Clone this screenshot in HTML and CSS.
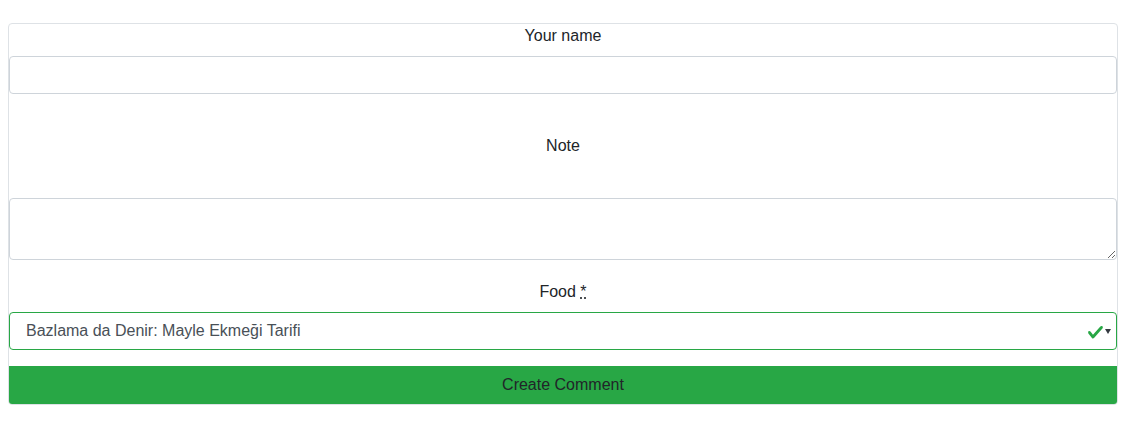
FILE: index.html
```html
<!DOCTYPE html>
<html lang="en">
<head>
<meta charset="utf-8">
<title>Create Comment</title>
<link rel="stylesheet" href="styles.css">
</head>
<body>
<form class="card">
  <label class="label label-name" for="name">Your name</label>
  <input class="control" id="name" type="text">
  <label class="label label-note" for="note">Note</label>
  <textarea class="control area" id="note" rows="2"></textarea>
  <label class="label label-food">Food <abbr class="req" title="required">*</abbr></label>
  <div class="select" role="combobox" aria-expanded="false">
    <span class="select-text">Bazlama da Denir: Mayle Ekmeği Tarifi</span>
    <svg class="check" width="17" height="13" viewBox="0 0 8 6.2" aria-hidden="true"><path fill="#28a745" d="M2.3 5.93L.6 3.73c-.4-1.04.46-1.4 1.1-.8l1.1 1.4 3.4-3.8c.6-.63 1.6-.27 1.2.7l-4 4.6c-.43.5-.8.4-1.1.1z" transform="translate(0,-0.2)"/></svg>
    <svg class="arrow" width="6" height="5" viewBox="0 0 6 5" aria-hidden="true"><path fill="#343a40" d="M0 0h6L3 5z"/></svg>
  </div>
  <button class="btn" type="button">Create Comment</button>
</form>
</body>
</html>
```
FILE: styles.css
```css
* { box-sizing: border-box; }
body {
  margin: 0;
  padding: 23px 24px 0 8px;
  font-family: "Liberation Sans", Arial, sans-serif;
  font-size: 16px;
  line-height: 24px;
  color: #212529;
  background: #fff;
}
.card {
  width: 1110px;
  border: 1px solid #dee2e6;
  border-radius: 4px;
  display: flex;
  flex-direction: column;
  overflow: hidden;
}
.label {
  display: block;
  text-align: center;
  line-height: 24px;
  height: 24px;
}
.label-name { margin-bottom: 8px; }
.label-note { margin-top: 40px; margin-bottom: 40px; }
.label-food { margin-top: 20px; margin-bottom: 8px; }
.req {
  text-decoration: underline dotted;
  cursor: help;
  border: 0;
}
.control {
  display: block;
  width: 100%;
  height: 38px;
  border: 1px solid #ced4da;
  border-radius: 4px;
  padding: 6px 12px;
  font: inherit;
  color: #495057;
  background: #fff;
  margin: 0;
}
.area {
  height: 62px;
  resize: vertical;
}
.select {
  height: 38px;
  border: 1px solid #28a745;
  border-radius: 4px;
  display: flex;
  align-items: center;
  padding: 0 5px 0 16px;
  color: #495057;
}
.select-text { flex: 1; }
.check { margin-right: 1px; margin-top: 2px; }
.btn {
  display: block;
  width: 100%;
  height: 38px;
  border: 0;
  margin: 16px 0 0;
  background: #28a745;
  color: #212529;
  font: inherit;
  padding: 0;
  cursor: pointer;
}
```
